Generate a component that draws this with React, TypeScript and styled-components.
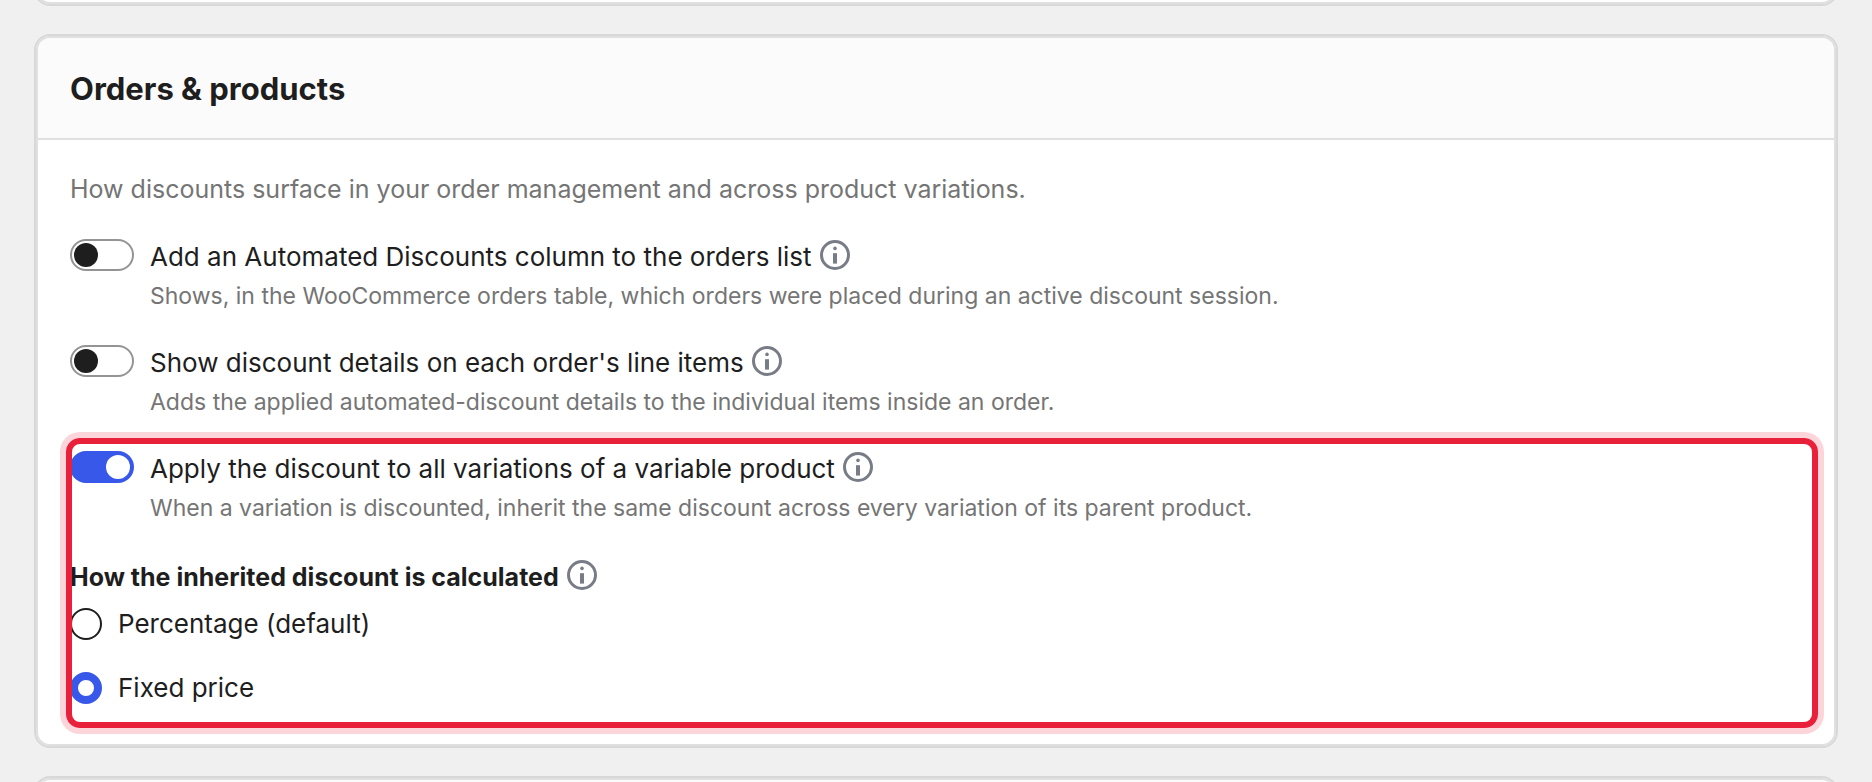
import React, { useState } from "react";
import styled, { createGlobalStyle, css } from "styled-components";

const GlobalStyle = createGlobalStyle`
  *, *::before, *::after { box-sizing: border-box; }
  html { height: 100%; overflow: hidden; background: #f0f0f0; }
  body {
    margin: 0;
    height: 100%;
    overflow: hidden;
    background: #f0f0f0;
    color: #1e1e1e;
    font-family: Inter, "Liberation Sans", sans-serif;
    font-size: 26px;
    line-height: 36px;
    -webkit-font-smoothing: antialiased;
  }
`;

const Page = styled.main`
  display: flex;
  flex-direction: column;
  gap: 28px;
  padding: 0 34px;
`;

const cardFrame = css`
  border: 2px solid #d8d8d8;
  box-shadow: inset 0 0 0 2px #e0e0e0;
  background: #fff;
`;

const CardEnd = styled.div`
  ${cardFrame}
  height: 34px;
  margin-top: -28px;
  border-radius: 16px;
`;

const CardStart = styled(CardEnd)`
  margin-top: 0;
  background: #fbfbfb;
`;

const Card = styled.section`
  ${cardFrame}
  padding: 2px;
  border-radius: 16px;
`;

const CardHeader = styled.header`
  display: flex;
  align-items: center;
  height: 102px;
  padding: 2px 32px 0;
  border-bottom: 2px solid #e0e0e0;
  border-radius: 12px 12px 0 0;
  background: #fbfbfb;
`;

const Title = styled.h2`
  margin: 0;
  font-size: 31px;
  line-height: 40px;
  font-weight: 700;
`;

const CardBody = styled.div`
  padding: 32px 32px 38px;
`;

const Intro = styled.p`
  margin: 0 0 32px;
  color: #757575;
  font-size: 25px;
  line-height: 34px;
`;

const SettingRow = styled.div`
  display: flex;
  gap: 16px;
  margin-bottom: 28px;
`;

const Switch = styled.input`
  appearance: none;
  flex: none;
  width: 64px;
  height: 32px;
  margin: 1px 0 0;
  padding: 2px;
  border: 2px solid #949494;
  border-radius: 16px;
  background: #fff;
  cursor: pointer;

  &::before {
    content: "";
    display: block;
    width: 24px;
    height: 24px;
    border-radius: 50%;
    background: #1e1e1e;
  }

  &:checked {
    border-color: #3858e9;
    background: #3858e9;
  }

  &:checked::before {
    margin-left: 32px;
    background: #fff;
  }
`;

const SettingText = styled.div`
  display: flex;
  flex-direction: column;
`;

const LabelLine = styled.div`
  display: flex;
  align-items: center;
  gap: 8px;
  height: 38px;
`;

const InfoButton = styled.button`
  display: flex;
  flex: none;
  margin: 0 0 4px;
  padding: 0;
  border: 0;
  background: none;
  color: #787c86;
  cursor: pointer;
`;

const Help = styled.p`
  margin: 0;
  color: #757575;
  font-size: 23px;
  line-height: 40px;
`;

const InheritGroup = styled.div`
  position: relative;

  &::after {
    content: "";
    position: absolute;
    inset: -12px -16px -22px -4px;
    border: 6px solid #e9203a;
    border-radius: 14px;
    box-shadow: 0 0 0 6px #fbd5da;
    pointer-events: none;
  }
`;

const Calculation = styled.fieldset`
  display: flex;
  flex-direction: column;
  min-width: 0;
  margin: 30px 0 0;
  padding: 0;
  border: 0;
`;

const Legend = styled.legend`
  padding: 0;
  font-size: 25px;
  font-weight: 700;
`;

const RadioList = styled.div`
  display: flex;
  flex-direction: column;
  gap: 28px;
  padding-top: 10px;
`;

const RadioLabel = styled.label`
  display: flex;
  align-items: center;
  gap: 16px;
`;

const Radio = styled.input`
  appearance: none;
  flex: none;
  width: 32px;
  height: 32px;
  margin: 0;
  border: 2px solid #1e1e1e;
  border-radius: 50%;
  background: #fff;

  &:checked {
    border: 8px solid #3858e9;
  }
`;

function Info({ about }: { about: string }) {
  return (
    <InfoButton type="button" aria-label={`More about: ${about}`}>
      <svg width="30" height="30" viewBox="0 0 30 30" aria-hidden="true">
        <circle cx="15" cy="15" r="13.5" fill="none" stroke="currentColor" strokeWidth="3" />
        <circle cx="15" cy="8.4" r="1.8" fill="currentColor" />
        <rect x="13" y="13.2" width="4" height="10.4" fill="currentColor" />
      </svg>
    </InfoButton>
  );
}

interface SettingProps {
  id: string;
  label: string;
  help: string;
  initial?: boolean;
}

function Setting({ id, label, help, initial = false }: SettingProps) {
  const [on, setOn] = useState(initial);
  return (
    <SettingRow>
      <Switch
        id={id}
        type="checkbox"
        role="switch"
        checked={on}
        aria-describedby={`${id}-help`}
        onChange={(e) => setOn(e.target.checked)}
      />
      <SettingText>
        <LabelLine>
          <label htmlFor={id}>{label}</label>
          <Info about={label} />
        </LabelLine>
        <Help id={`${id}-help`}>{help}</Help>
      </SettingText>
    </SettingRow>
  );
}

export default function App() {
  const [mode, setMode] = useState("fixed");
  return (
    <>
      <GlobalStyle />
      <Page>
        <CardEnd />
        <Card aria-labelledby="orders-title">
          <CardHeader>
            <Title id="orders-title">Orders &amp; products</Title>
          </CardHeader>
          <CardBody>
            <Intro>How discounts surface in your order management and across product variations.</Intro>
            <Setting
              id="orders-column"
              label="Add an Automated Discounts column to the orders list"
              help="Shows, in the WooCommerce orders table, which orders were placed during an active discount session."
            />
            <Setting
              id="line-items"
              label="Show discount details on each order's line items"
              help="Adds the applied automated-discount details to the individual items inside an order."
            />
            <InheritGroup>
              <Setting
                id="all-variations"
                label="Apply the discount to all variations of a variable product"
                help="When a variation is discounted, inherit the same discount across every variation of its parent product."
                initial
              />
              <Calculation>
                <Legend>
                  <LabelLine>
                    How the inherited discount is calculated
                    <Info about="How the inherited discount is calculated" />
                  </LabelLine>
                </Legend>
                <RadioList>
                  <RadioLabel>
                    <Radio
                      type="radio"
                      name="calculation"
                      checked={mode === "percentage"}
                      onChange={() => setMode("percentage")}
                    />
                    Percentage (default)
                  </RadioLabel>
                  <RadioLabel>
                    <Radio
                      type="radio"
                      name="calculation"
                      checked={mode === "fixed"}
                      onChange={() => setMode("fixed")}
                    />
                    Fixed price
                  </RadioLabel>
                </RadioList>
              </Calculation>
            </InheritGroup>
          </CardBody>
        </Card>
        <CardStart />
      </Page>
    </>
  );
}
